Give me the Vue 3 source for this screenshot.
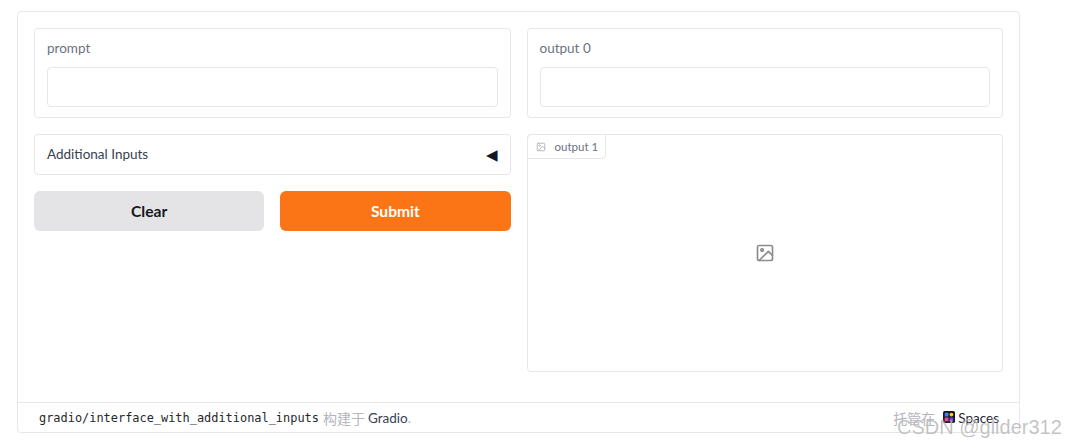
<script setup>
const footerRepo = 'gradio/interface_with_additional_inputs'
</script>

<template>
  <div class="page">
    <div class="card">
      <div class="main">
        <div class="col">
          <div class="block field">
            <div class="label">prompt</div>
            <div class="input"></div>
          </div>
          <div class="block accordion">
            <span class="acc-text">Additional Inputs</span>
            <span class="caret">◀</span>
          </div>
          <div class="actions">
            <button class="btn clear">Clear</button>
            <button class="btn submit">Submit</button>
          </div>
        </div>
        <div class="col">
          <div class="block field field-out">
            <div class="label">output 0</div>
            <div class="input"></div>
          </div>
          <div class="block image">
            <div class="tag">
              <svg class="ico-s" viewBox="0 0 24 24" fill="none" stroke="currentColor" stroke-width="2" stroke-linecap="round" stroke-linejoin="round">
                <rect x="3" y="3" width="18" height="18" rx="2" />
                <circle cx="8.5" cy="8.5" r="1.5" />
                <polyline points="21 15 16 10 5 21" />
              </svg>
              <span>output 1</span>
            </div>
            <div class="empty">
              <svg class="ico-l" viewBox="0 0 24 24" fill="none" stroke="currentColor" stroke-width="2" stroke-linecap="round" stroke-linejoin="round">
                <rect x="3" y="3" width="18" height="18" rx="2" />
                <circle cx="8.5" cy="8.5" r="1.5" />
                <polyline points="21 15 16 10 5 21" />
              </svg>
            </div>
          </div>
        </div>
      </div>
      <div class="footer">
        <div class="foot-left">
          <span class="mono">{{ footerRepo }}</span>
          <span class="muted">构建于</span>
          <span class="dark">Gradio</span><span class="muted dot">.</span>
        </div>
        <div class="foot-right">
          <span class="muted">托管在</span>
          <svg class="spaces" viewBox="0 0 14 14">
            <rect x="0" y="0" width="14" height="14" rx="2" fill="#16161f" />
            <rect x="2" y="2" width="4.4" height="4.4" fill="#3b82f6" />
            <rect x="7.6" y="2" width="4.4" height="4.4" rx="2.2" fill="#facc15" />
            <rect x="2" y="7.6" width="4.4" height="4.4" fill="#ec4899" />
            <rect x="7.6" y="7.6" width="4.4" height="4.4" fill="#7c3aed" />
          </svg>
          <span class="dark spaces-text">Spaces</span>
        </div>
      </div>
    </div>
    <div class="watermark">CSDN @glider312</div>
  </div>
</template>

<style>
html, body { background: #fff; }
</style>

<style scoped>
.page {
  position: relative;
  width: 1066px;
  height: 445px;
  overflow: hidden;
  padding: 11px 0 0 17px;
  box-sizing: border-box;
  font-family: Lato, "Noto Sans", "Noto Sans CJK SC", sans-serif;
  background: #fff;
}
.card {
  width: 1003px;
  height: 422px;
  box-sizing: border-box;
  border: 1px solid #e5e7eb;
  border-radius: 4px;
  display: flex;
  flex-direction: column;
}
.main {
  flex: 1;
  display: flex;
  gap: 16px;
  padding: 16px 16px 0;
}
.col {
  flex: 1 1 0;
  min-width: 0;
  display: flex;
  flex-direction: column;
  gap: 16px;
}
.block {
  box-sizing: border-box;
  border: 1px solid #e5e7eb;
  border-radius: 4px;
  background: #fff;
}
.field {
  height: 90px;
  padding: 11px 12px 10px;
}
.label {
  font-size: 13.5px;
  line-height: 17px;
  color: #6b7280;
  margin-bottom: 10px;
}
.input {
  height: 40px;
  box-sizing: border-box;
  border: 1px solid #e5e7eb;
  border-radius: 4px;
}
.accordion {
  height: 41px;
  padding: 0 12px 2px;
  display: flex;
  align-items: center;
  justify-content: space-between;
  font-size: 13.5px;
  color: #374151;
}
.caret {
  font-family: "DejaVu Sans", sans-serif;
  font-size: 15px;
  line-height: 14px;
  margin-top: 2px;
  color: #111827;
}
.actions {
  display: flex;
  gap: 16px;
}
.btn {
  flex: 1 1 0;
  height: 40px;
  padding: 0;
  border: none;
  border-radius: 6px;
  font-family: inherit;
  font-size: 15.6px;
  font-weight: 700;
}
.clear {
  background: #e4e4e7;
  color: #18181b;
}
.submit {
  background: #fb7416;
  color: #fff;
}
.image {
  height: 238px;
  display: flex;
  flex-direction: column;
}
.tag {
  align-self: flex-start;
  display: flex;
  align-items: center;
  gap: 9px;
  height: 25px;
  box-sizing: border-box;
  margin: -1px 0 0 -1px;
  padding: 0 7px 0 8px;
  border: 1px solid #e5e7eb;
  border-radius: 4px 0 4px 0;
  font-size: 11.5px;
  color: #6b7280;
}
.ico-s {
  width: 10px;
  height: 10px;
  color: #a8adb5;
}
.empty {
  flex: 1;
  display: flex;
  align-items: center;
  justify-content: center;
  padding-bottom: 25px;
}
.ico-l {
  width: 20px;
  height: 20px;
  color: #8c8c8c;
}
.footer {
  height: 30px;
  box-sizing: border-box;
  border-top: 1px solid #e5e7eb;
  padding: 0 20px 0 21px;
  display: flex;
  align-items: center;
  justify-content: space-between;
  font-size: 14px;
}
.foot-left, .foot-right {
  display: flex;
  align-items: center;
}
.mono {
  font-family: "DejaVu Sans Mono", "Liberation Mono", monospace;
  font-size: 11.93px;
  color: #27272a;
  margin-right: 4px;
}
.muted {
  color: #b4b4ba;
}
.dark {
  font-size: 13.5px;
  color: #374151;
  margin-left: 3px;
}
.dot {
  margin: 0;
}
.spaces {
  width: 12px;
  height: 12px;
  margin-left: 8px;
  margin-bottom: 2px;
}
.spaces-text {
  margin-left: 3px;
  color: #1f2937;
}
.watermark {
  position: absolute;
  left: 897px;
  top: 416px;
  font-family: "Liberation Sans", sans-serif;
  font-size: 20px;
  color: rgba(120, 120, 120, 0.45);
  text-shadow: 0 0 1px rgba(255, 255, 255, 0.8);
  white-space: nowrap;
}
</style>
